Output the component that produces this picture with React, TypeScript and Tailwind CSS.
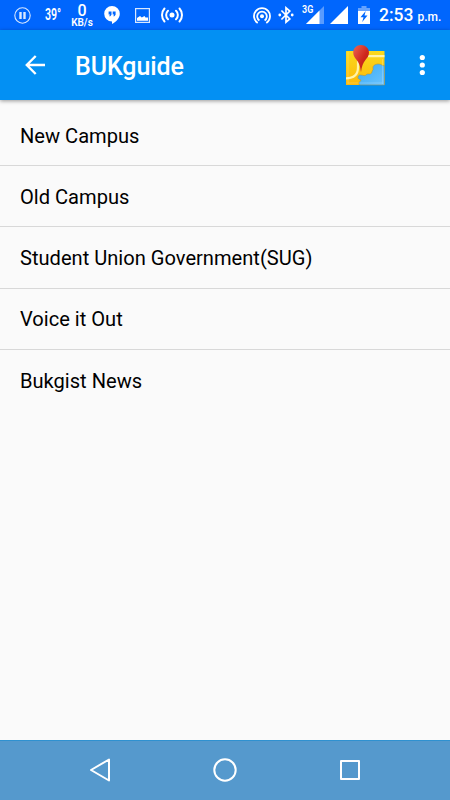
import type { ReactNode } from 'react'

const items = ['New Campus', 'Old Campus', 'Student Union Government(SUG)', 'Voice it Out', 'Bukgist News']

function PauseIcon(): ReactNode {
  return (
    <svg width="17" height="17" viewBox="0 0 17 17" fill="none" stroke="#fff">
      <circle cx="8.5" cy="8.5" r="7.7" strokeWidth="1.1" opacity="0.85" />
      <path d="M6.5 5v7M10.5 5v7" strokeWidth="2.4" opacity="0.85" />
    </svg>
  )
}

function HangoutsIcon(): ReactNode {
  return (
    <svg width="16" height="18" viewBox="0 0 16 18">
      <path d="M8 0a7.8 7.7 0 0 0 0 15.4V18c3.6-1.7 7.8-5.8 7.8-10.3A7.8 7.7 0 0 0 8 0z" fill="#fff" />
      <path d="M4.6 5.5h2.9v3.2L6.3 10.3H5.2l.8-1.7H4.6zM8.7 5.5h2.9v3.2l-1.2 1.6H9.3l.8-1.7H8.7z" fill="#0066fd" />
    </svg>
  )
}

function PictureIcon(): ReactNode {
  return (
    <svg width="15" height="15" viewBox="0 0 15 15">
      <rect x="0.6" y="0.6" width="13.8" height="13.8" fill="none" stroke="#fff" strokeWidth="1.2" opacity="0.85" />
      <path d="M2 12.8V10l3-2 1.8 1.5L9.5 8l1 1.5H13v3.3z" fill="#fff" />
    </svg>
  )
}

function BroadcastIcon(): ReactNode {
  return (
    <svg width="22" height="16" viewBox="0 0 22 16" fill="none" stroke="#fff" strokeWidth="2" strokeLinecap="round">
      <circle cx="11" cy="8" r="2.5" fill="#fff" stroke="none" />
      <path d="M7 3.7a5.9 5.9 0 0 0 0 8.6M15 3.7a5.9 5.9 0 0 1 0 8.6M3.5 1.5a9.7 9.7 0 0 0 0 13M18.5 1.5a9.7 9.7 0 0 1 0 13" />
    </svg>
  )
}

function HotspotIcon(): ReactNode {
  return (
    <svg width="18" height="17" viewBox="0 0 18 17" fill="none" stroke="#fff" strokeWidth="1.8">
      <circle cx="9" cy="9.3" r="2" fill="#fff" stroke="none" />
      <path d="M6.4 13.4a4.8 4.8 0 1 1 5.2 0M4.7 15.9a8 8 0 1 1 8.6 0" />
    </svg>
  )
}

function BluetoothIcon(): ReactNode {
  return (
    <svg width="16" height="18" viewBox="0 0 16 18" fill="none" stroke="#fff" strokeWidth="1.7">
      <path d="M3.4 4.5l8.4 8.4L8 16.2V1.8l3.8 3.3-8.4 8.4" />
      <circle cx="1.8" cy="9" r="1.4" fill="#fff" stroke="none" />
      <circle cx="14.2" cy="9" r="1.4" fill="#fff" stroke="none" />
    </svg>
  )
}

function MobileSignal(): ReactNode {
  return (
    <span className="relative h-[18px] w-[22px]">
      <svg width="22" height="18" viewBox="0 0 22 18">
        <path d="M4 18L22 0v18z" fill="#fff" opacity="0.35" />
        <path d="M4 18L17.5 4.5V18z" fill="#fff" />
      </svg>
      <span className="absolute top-[-2px] left-0 origin-left scale-x-90 text-[10px] leading-3 font-semibold">3G</span>
    </span>
  )
}

function BatteryIcon(): ReactNode {
  return (
    <svg width="12" height="18" viewBox="0 0 12 18">
      <path d="M3.5 0h5v2H12v3H0V2h3.5z" fill="#fff" opacity="0.4" />
      <path d="M0 5h12v13H0z" fill="#fff" />
      <path d="M7.7 5L2.5 11.3h3L4.2 16l5.3-6.4h-3z" fill="#0066fd" />
    </svg>
  )
}

function MapIcon(): ReactNode {
  return (
    <svg width="40" height="42" viewBox="0 0 40 42">
      <defs>
        <linearGradient id="land" x1="0" y1="0" x2="0" y2="1">
          <stop offset="0" stopColor="#fad91c" />
          <stop offset="1" stopColor="#fdb90b" />
        </linearGradient>
        <linearGradient id="water" x1="0" y1="0" x2="1" y2="1">
          <stop offset="0" stopColor="#39abf5" />
          <stop offset="1" stopColor="#69c2ff" />
        </linearGradient>
        <linearGradient id="pin" x1="0" y1="0" x2="1" y2="1">
          <stop offset="0" stopColor="#ed6554" />
          <stop offset="0.55" stopColor="#cf281d" />
          <stop offset="1" stopColor="#af1b15" />
        </linearGradient>
      </defs>
      <rect x="1" y="7" width="38.5" height="34" rx="0.5" fill="url(#land)" />
      <path d="M23 12.2h16.5M1 34.3c8.500 0 12-3.5 12-11V17" fill="none" stroke="#fff3a8" strokeWidth="2.2" />
      <path d="M39.5 21.5C37.5 22.5 36.500 19.8 33 20c-3.200.2-5.500 2-5 4.200.5 2-1 2-1 3.600 0 2-2 2.600-3.500 2.200-2-.5-2.500 2-4.500 1.600-2.200-.5-4.800-1.200-5.700.6-.8 1.600 0 2.800 1.500 3.200 1.800.5 1 1.800-.3 2.400-1 .6-.6 2.200 0 3.200h25z" fill="url(#water)" stroke="#a98d3c" strokeWidth="0.5" />
      <path d="M3 8v32M37.5 15v25M3 39h34.500" stroke="#fff" strokeWidth="0.7" opacity="0.3" />
      <path d="M16 28.300c-.8-6.300-1.800-9.300-4.500-12.500C9.500 13.300 8.200 11.500 8.200 8.500 8.200 4.200 11.600 1 16 1s8 3.200 8 7.500c0 3-1.500 5-3.400 7.300C18 19 16.700 22.500 16 28.300z" fill="url(#pin)" />
    </svg>
  )
}

function StatusBar(): ReactNode {
  return (
    <div className="flex h-[30px] shrink-0 items-center bg-[#0066fd] text-white">
      <div className="ml-[14px]"><PauseIcon /></div>
      <div className="ml-[14px] w-[18px] origin-left scale-x-[0.66] text-[16px] font-semibold whitespace-nowrap">39°</div>
      <div className="ml-[7px] flex w-[24px] flex-col items-center pb-px">
        <span className="text-[16px] leading-[15px] font-medium">0</span>
        <span className="text-[10px] leading-[9px] font-semibold whitespace-nowrap">KB/s</span>
      </div>
      <div className="ml-[10px]"><HangoutsIcon /></div>
      <div className="ml-[15px]"><PictureIcon /></div>
      <div className="ml-[11px]"><BroadcastIcon /></div>
      <div className="ml-auto flex items-center">
        <div className="mr-[7px]"><HotspotIcon /></div>
        <div className="mr-2"><BluetoothIcon /></div>
        <div className="mr-[6px] flex"><MobileSignal /></div>
        <svg className="mr-[10px]" width="18" height="18" viewBox="0 0 18 18"><path d="M0 18L18 0v18z" fill="#fff" /></svg>
        <BatteryIcon />
        <div className="ml-[9px] flex w-[71px] items-baseline pt-px whitespace-nowrap">
          <span className="text-[17.5px] font-medium">2:53</span>
          <span className="ml-1 text-[12px] font-medium">p.m.</span>
        </div>
      </div>
    </div>
  )
}

function AppBar(): ReactNode {
  return (
    <header className="z-10 flex h-[70px] shrink-0 items-center bg-[#0390f3] text-white shadow-[0_1px_4px_rgba(0,0,0,0.4)]">
      <button type="button" aria-label="Back" className="ml-[25px]">
        <svg width="21" height="20" viewBox="0 0 21 20" fill="none" stroke="#fff" strokeWidth="2.4">
          <path d="M20 10H2M10.7 1L1.8 10l8.9 9" />
        </svg>
      </button>
      <h1 className="ml-[29px] pt-[3px] text-[25px] leading-[30px] font-medium tracking-[-0.1px]">BUKguide</h1>
      <button type="button" aria-label="Map" className="ml-auto"><MapIcon /></button>
      <button type="button" aria-label="More" className="mr-[25px] ml-[34px]">
        <svg width="6" height="22" viewBox="0 0 6 22" fill="#fff">
          <circle cx="3.3" cy="3.5" r="2.6" />
          <circle cx="3.3" cy="11" r="2.6" />
          <circle cx="3.3" cy="18.5" r="2.6" />
        </svg>
      </button>
    </header>
  )
}

function NavBar(): ReactNode {
  return (
    <nav className="flex h-[60px] shrink-0 items-center justify-between border-t border-[#2f91d0] bg-[#5599cd] px-[88px] pb-px">
      <svg width="24" height="26" viewBox="0 0 24 26" fill="none" stroke="#fff" strokeWidth="2" strokeLinejoin="round">
        <path d="M21 2.5v21L3 13z" />
      </svg>
      <svg width="26" height="26" viewBox="0 0 26 26" fill="none" stroke="#fff" strokeWidth="2">
        <circle cx="13" cy="13" r="10.7" />
      </svg>
      <svg width="24" height="26" viewBox="0 0 24 26" fill="none" stroke="#fff" strokeWidth="2" strokeLinejoin="round">
        <rect x="3" y="4" width="18" height="18" />
      </svg>
    </nav>
  )
}

export default function App(): ReactNode {
  return (
    <div className="flex h-[800px] w-[450px] flex-col overflow-hidden bg-[#fafafa] font-['Roboto',sans-serif]">
      <StatusBar />
      <AppBar />
      <ul className="flex-1 pt-[4.8px]">
        {items.map((item) => (
          <li key={item} className="flex h-[61.25px] items-center border-b border-[#d8d8d8] px-5 pt-[1.5px] text-[20.1px] text-black last:border-b-0">{item}</li>
        ))}
      </ul>
      <NavBar />
    </div>
  )
}
